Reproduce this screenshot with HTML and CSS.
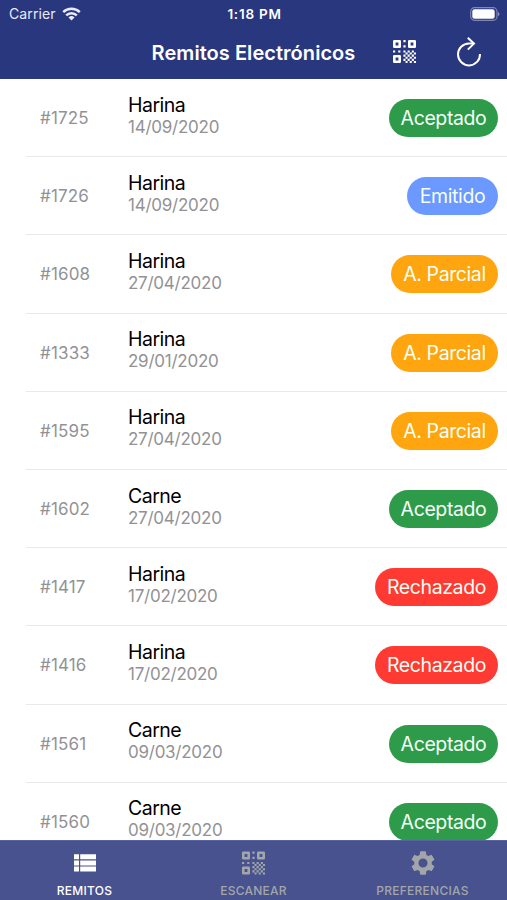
FILE: index.html
```html
<!DOCTYPE html>
<html lang="es">
<head>
<meta charset="utf-8">
<title>Remitos Electrónicos</title>
<link rel="stylesheet" href="styles.css">
</head>
<body>
<svg class="defs" width="0" height="0" aria-hidden="true">
  <symbol id="qr" viewBox="0 0 23 23">
    <path fill="currentColor" fill-rule="evenodd" d="M1.2 0h5.6a1.2 1.2 0 0 1 1.2 1.2v5.6A1.2 1.2 0 0 1 6.8 8H1.2A1.2 1.2 0 0 1 0 6.8V1.2A1.2 1.2 0 0 1 1.2 0zM2.6 2.6v2.800h2.800V2.600zM16.200 0h5.600a1.200 1.200 0 0 1 1.200 1.200v5.600a1.200 1.200 0 0 1-1.200 1.200h-5.600A1.200 1.200 0 0 1 15 6.800V1.200A1.200 1.200 0 0 1 16.200 0zm1.400 2.600v2.800h2.800V2.600zM1.200 15h5.600A1.200 1.200 0 0 1 8 16.200v5.600A1.200 1.200 0 0 1 6.800 23H1.200A1.200 1.200 0 0 1 0 21.800v-5.600A1.200 1.200 0 0 1 1.200 15zm1.400 2.600v2.800h2.800v-2.800z"/>
    <path fill="currentColor" d="M10.400 0h2.200v2.200h-2.200zM10.400 5.200h2.200v2.200h-2.200zM0 10.400h2.200v2.200H0zM5.200 10.400h2.200v2.200H5.200zM10.400 10.400h2.100v2.100h-2.100zM14.600 10.400h2.100v2.100h-2.100zM18.800 10.400h2.100v2.100h-2.100zM12.500 12.500h2.100v2.100h-2.100zM16.700 12.500h2.100v2.100h-2.100zM20.900 12.500H23v2.100h-2.100zM10.400 14.600h2.100v2.100h-2.100zM14.600 14.600h2.100v2.100h-2.100zM18.800 14.600h2.100v2.100h-2.100zM12.500 16.700h2.100v2.100h-2.100zM16.700 16.700h2.100v2.100h-2.100zM20.900 16.700H23v2.100h-2.100zM10.400 18.800h2.100v2.100h-2.100zM14.600 18.800h2.100v2.100h-2.100zM18.800 18.800h2.100v2.100h-2.100zM12.500 20.900h2.100V23h-2.100zM16.700 20.900h2.100V23h-2.100zM20.900 20.900H23V23h-2.100z"/>
  </symbol>
</svg>
<div class="app">
  <header class="top">
    <div class="status">
      <div class="carrier"><span>Carrier</span>
        <svg width="19" height="14" viewBox="0 0 19 14"><g fill="none" stroke="currentColor" stroke-width="2.500"><path d="M1.200 5.200a12 12 0 0 1 16.600 0"/><path d="M4.200 8.300a7.600 7.600 0 0 1 10.600 0"/></g><path fill="currentColor" d="M6.500 10.400a4.300 4.300 0 0 1 6 0L9.500 13.600z"/></svg>
      </div>
      <div class="time">1:18 PM</div>
      <div class="power"><svg width="30" height="14" viewBox="0 0 30 14"><rect x=".7" y=".7" width="26.300" height="12.600" rx="3.800" fill="none" stroke="#7f87b4" stroke-width="1.200"/><rect x="2.300" y="2.300" width="22.400" height="9.400" rx="2.300" fill="#fff"/><path d="M28 4.900v4.200q1.500-.7 1.500-2.100T28 4.900z" fill="#8d94bd"/></svg></div>
    </div>
    <div class="nav">
      <h1>Remitos Electrónicos</h1>
      <div class="actions">
        <svg width="23" height="23"><use href="#qr"/></svg>
        <svg width="26" height="30" viewBox="0 0 26 30" fill="none" stroke="currentColor" stroke-width="2"><path d="M24 17A11 11 0 1 1 13 6.400h4.500"/><path d="M11.800.8L18 6.600l-6.200 6"/></svg>
      </div>
    </div>
  </header>
  <main class="list">
    <div class="row"><span class="num">#1725</span><div class="info"><b>Harina</b><time>14/09/2020</time></div><span class="pill ok">Aceptado</span></div>
    <div class="row"><span class="num">#1726</span><div class="info"><b>Harina</b><time>14/09/2020</time></div><span class="pill sent">Emitido</span></div>
    <div class="row"><span class="num">#1608</span><div class="info"><b>Harina</b><time>27/04/2020</time></div><span class="pill part">A. Parcial</span></div>
    <div class="row"><span class="num">#1333</span><div class="info"><b>Harina</b><time>29/01/2020</time></div><span class="pill part">A. Parcial</span></div>
    <div class="row"><span class="num">#1595</span><div class="info"><b>Harina</b><time>27/04/2020</time></div><span class="pill part">A. Parcial</span></div>
    <div class="row"><span class="num">#1602</span><div class="info"><b>Carne</b><time>27/04/2020</time></div><span class="pill ok">Aceptado</span></div>
    <div class="row"><span class="num">#1417</span><div class="info"><b>Harina</b><time>17/02/2020</time></div><span class="pill no">Rechazado</span></div>
    <div class="row"><span class="num">#1416</span><div class="info"><b>Harina</b><time>17/02/2020</time></div><span class="pill no">Rechazado</span></div>
    <div class="row"><span class="num">#1561</span><div class="info"><b>Carne</b><time>09/03/2020</time></div><span class="pill ok">Aceptado</span></div>
    <div class="row"><span class="num">#1560</span><div class="info"><b>Carne</b><time>09/03/2020</time></div><span class="pill ok">Aceptado</span></div>
  </main>
  <nav class="tabs">
    <div class="tab active"><svg width="22" height="24" viewBox="0 0 22 24" fill="currentColor"><path d="M0 3.200h5v5H0zM6.200 3.200H22v5H6.200zM0 9.400h5v5H0zM6.200 9.400H22v5H6.200zM0 15.600h5v5H0zM6.200 15.600H22v5H6.200z"/></svg><span>REMITOS</span></div>
    <div class="tab"><svg width="23" height="24"><use href="#qr"/></svg><span>ESCANEAR</span></div>
    <div class="tab"><svg width="28" height="28" viewBox="0 0 24 24" fill="currentColor"><path d="M19.430 12.980c.04-.32.07-.64.07-.98s-.03-.66-.07-.98l2.110-1.650c.19-.15.24-.42.12-.64l-2-3.460c-.12-.22-.39-.3-.61-.22l-2.490 1c-.52-.4-1.080-.73-1.690-.98l-.38-2.650A.488.488 0 0 0 14 2h-4c-.25 0-.46.180-.49.420l-.38 2.650c-.61.250-1.170.590-1.690.980l-2.490-1c-.23-.09-.49 0-.61.220l-2 3.460c-.13.220-.07.490.12.640l2.110 1.650c-.04.320-.07.650-.07.980s.03.660.07.980l-2.110 1.650c-.19.150-.24.420-.12.640l2 3.460c.12.220.39.300.61.220l2.490-1c.52.400 1.080.730 1.690.980l.38 2.650c.03.240.24.420.49.420h4c.25 0 .46-.18.49-.42l.38-2.650c.61-.25 1.170-.59 1.690-.98l2.490 1c.23.090.49 0 .61-.22l2-3.460c.12-.22.07-.49-.12-.64l-2.110-1.650zM12 15.900a3.900 3.900 0 1 1 0-7.800 3.900 3.900 0 0 1 0 7.800z"/></svg><span>PREFERENCIAS</span></div>
  </nav>
</div>
</body>
</html>
```

FILE: styles.css
```css
* { box-sizing: border-box; }
body { margin: 0; background: #fff; font-family: Inter, "Liberation Sans", sans-serif; }
svg { display: block; flex: none; }
.defs { position: absolute; }
.app { width: 507px; height: 900px; display: flex; flex-direction: column; overflow: hidden; }
.top { height: 79px; flex: none; background: #29377f; color: #fff; }
.status { height: 27px; display: grid; grid-template-columns: 1fr auto 1fr; align-items: center; padding: 0 7px 0 9px; }
.carrier { display: flex; gap: 6px; align-items: center; font-size: 14px; color: #e8ebfa; letter-spacing: .1px; }
.time { font-size: 13.500px; font-weight: 600; letter-spacing: .75px; }
.power { justify-self: end; }
.nav { height: 52px; display: grid; grid-template-columns: 1fr auto 1fr; align-items: center; }
h1 { grid-column: 2; margin: 0; font-size: 20px; line-height: 50px; font-weight: 600; letter-spacing: .05px; }
.actions { justify-self: end; display: flex; align-items: center; gap: 40px; padding: 0 25px 3px 0; }
.list { flex: 1; min-height: 0; overflow: hidden; }
.row { height: 78.200px; margin-left: 26px; padding: 1px 9px 0 13px; display: flex; align-items: center; border-bottom: 1.500px solid #e9e9eb; }
.num { width: 89px; padding-left: 1px; font-size: 17px; color: #929295; letter-spacing: .15px; }
.info { flex: 1; display: flex; flex-direction: column; padding-bottom: 5px; }
.info b { font-size: 19.500px; line-height: 23px; font-weight: 400; color: #000; letter-spacing: -.5px; }
.info time { font-size: 17px; line-height: 21px; color: #929295; letter-spacing: -.25px; }
.pill { height: 38px; border-radius: 19px; line-height: 38px; color: #f5fff5; font-size: 19.500px; text-align: center; white-space: nowrap; letter-spacing: -.4px; }
.ok { width: 109px; background: #2e9b4b; }
.sent { width: 91px; background: #6b99ff; }
.part { width: 107px; background: #ffa50f; }
.no { width: 123px; background: #ff3a32; }
.tabs { height: 60px; flex: none; display: grid; grid-template-columns: repeat(3, 1fr); background: #47528f; border-top: 1px solid #5963a0; }
.tab { display: flex; flex-direction: column; align-items: center; justify-content: space-between; padding: 8px 0 1px; color: #a3a6a9; font-size: 12px; font-weight: 500; line-height: 16px; letter-spacing: .25px; }
.tab svg { height: 28px; }
.active { color: #fff; }
```
